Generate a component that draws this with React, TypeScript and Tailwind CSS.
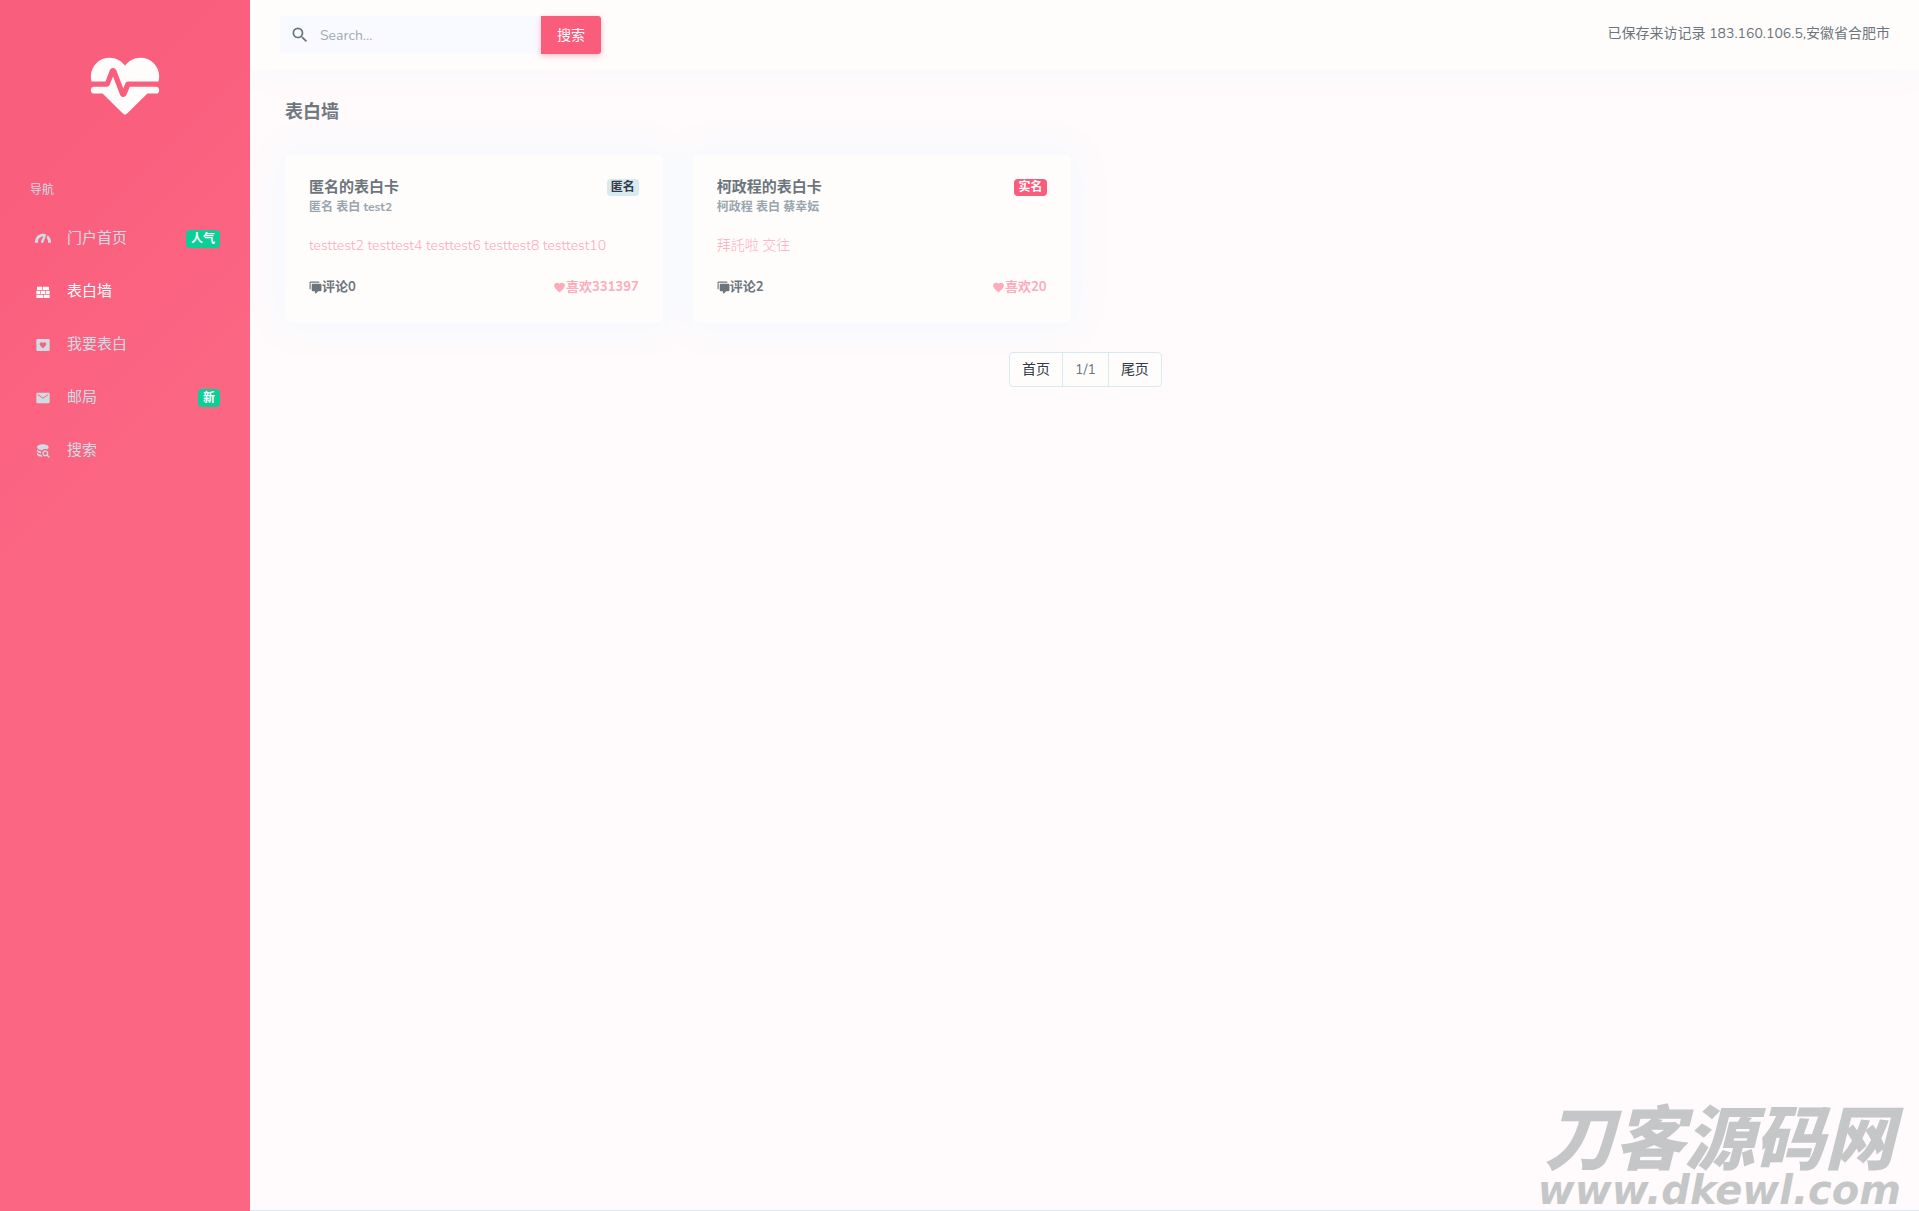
import React from "react";

const ICONS = {
  pulse:
    "M7.5,4A5.5,5.5 0 0,0 2,9.5C2,10 2.09,10.5 2.22,11H6.3L7.57,7.63C7.87,6.83 9.05,6.75 9.43,7.63L11.5,13L12.09,11.58C12.22,11.25 12.57,11 13,11H21.78C21.91,10.5 22,10 22,9.5A5.5,5.5 0 0,0 16.5,4C14.64,4 13,4.93 12,6.34C11,4.93 9.36,4 7.5,4M3,12.5A1,1 0 0,0 2,13.5A1,1 0 0,0 3,14.5H5.44L11,20C12,20.9 12,20.9 13,20L18.56,14.5H21A1,1 0 0,0 22,13.5A1,1 0 0,0 21,12.5H13.4L12.47,14.8C12.07,15.81 10.92,15.67 10.55,14.83L8.5,9.5L7.54,11.83C7.39,12.21 7.05,12.5 6.6,12.5H3Z",
  gauge:
    "M12,4C5.4,4 0,9.4 0,16V17.5H4.5V16C4.5,11.9 7.9,8.3 12,8.3H12.6L9,15.4C8,17.8 11.6,19 12.6,16.8L17,5.2C15.5,4.4 13.8,4 12,4M18.9,6.2L17.3,10.3C18.7,11.8 19.5,13.8 19.5,16V17.5H24V16C24,12 22,8.4 18.9,6.2Z",
  wall: "M2,16H12V21H2V16M2,10H8V15H2V10M9,10H15V15H9V10M16,10H22V15H16V10M13,16H22V21H13V16M3,4H11V9H3V4M12,4H21V9H12V4Z",
  heartBox:
    "M4,3H20A2,2 0 0,1 22,5V19A2,2 0 0,1 20,21H4A2,2 0 0,1 2,19V5A2,2 0 0,1 4,3M12,17L12.72,16.34C15.3,14 17,12.46 17,10.57C17,9.03 15.79,7.82 14.25,7.82C13.38,7.82 12.55,8.23 12,8.87C11.45,8.23 10.62,7.82 9.75,7.82C8.21,7.82 7,9.03 7,10.57C7,12.46 8.7,14 11.28,16.34L12,17Z",
  mail: "M20,4H4A2,2 0 0,0 2,6V18A2,2 0 0,0 4,20H20A2,2 0 0,0 22,18V6A2,2 0 0,0 20,4M20,7.5L12,13L4,7.5V6L12,11.5L20,6V7.5Z",
  database:
    "M18.68,12.32C16.92,10.56 14.07,10.57 12.32,12.33C10.56,14.09 10.56,16.94 12.32,18.69C13.81,20.17 16.11,20.43 17.89,19.32L21,22.39L22.39,21L19.3,17.89C20.43,16.12 20.17,13.8 18.68,12.32M17.27,17.27C16.29,18.25 14.71,18.24 13.73,17.27C12.76,16.29 12.76,14.71 13.74,13.73C14.71,12.76 16.29,12.76 17.27,13.73C18.24,14.71 18.24,16.29 17.27,17.27M10.9,20.1C10.25,19.44 9.74,18.65 9.42,17.78C6.27,17.25 3,15.76 3,14V17C3,19.21 7.58,21 12,21V21C11.6,20.74 11.23,20.44 10.9,20.1M3,9V12C3,13.68 6.07,15.12 9,15.7C9,15.63 9,15.57 9,15.5C9,14.57 9.2,13.65 9.58,12.81C6.34,12.3 3,10.79 3,9M12,2C7.58,2 3,4 3,6.5C3,9 7,10.68 10.85,11H10.9C12.1,9.74 13.76,9 15.5,9C16.41,9 17.31,9.19 18.14,9.56C19.17,9.09 20.5,8.12 20.5,6.5C20.5,4 16.42,2 12,2Z",
  magnify:
    "M9.5,3A6.5,6.5 0 0,1 16,9.5C16,11.11 15.41,12.59 14.44,13.73L14.71,14H15.5L20.5,19L19,20.5L14,15.5V14.71L13.73,14.44C12.59,15.41 11.11,16 9.5,16A6.5,6.5 0 0,1 3,9.5A6.5,6.5 0 0,1 9.5,3M9.5,5C7,5 5,7 5,9.5C5,12 7,14 9.5,14C12,14 14,12 14,9.5C14,7 12,5 9.5,5Z",
  comments:
    "M12,23A1,1 0 0,1 11,22V19H7A2,2 0 0,1 5,17V7A2,2 0 0,1 7,5H21A2,2 0 0,1 23,7V17A2,2 0 0,1 21,19H16.9L13.2,22.71C13,22.9 12.75,23 12.5,23V23H12M3,15H1V3A2,2 0 0,1 3,1H19V3H3V15Z",
  heart:
    "M12,21.35L10.55,20.03C5.4,15.36 2,12.27 2,8.5C2,5.41 4.42,3 7.5,3C9.24,3 10.91,3.81 12,5.08C13.09,3.81 14.76,3 16.5,3C19.58,3 22,5.41 22,8.5C22,12.27 18.6,15.36 13.45,20.03L12,21.35Z",
};

function Icon({ name, className }: { name: keyof typeof ICONS; className: string }) {
  return (
    <svg viewBox="0 0 24 24" fill="currentColor" aria-hidden="true" className={className}>
      <path d={ICONS[name]} />
    </svg>
  );
}

type NavItem = { icon: keyof typeof ICONS; label: string; badge?: string; active?: boolean };

const NAV: NavItem[] = [
  { icon: "gauge", label: "门户首页", badge: "人气" },
  { icon: "wall", label: "表白墙", active: true },
  { icon: "heartBox", label: "我要表白" },
  { icon: "mail", label: "邮局", badge: "新" },
  { icon: "database", label: "搜索" },
];

const CARDS = [
  {
    title: "匿名的表白卡",
    sub: "匿名 表白 test2",
    tag: "匿名",
    anonymous: true,
    text: "testtest2 testtest4 testtest6 testtest8 testtest10",
    comments: 0,
    likes: 331397,
  },
  {
    title: "柯政程的表白卡",
    sub: "柯政程 表白 蔡幸妘",
    tag: "实名",
    anonymous: false,
    text: "拜託啦 交往",
    comments: 2,
    likes: 20,
  },
];

function Sidebar() {
  return (
    <aside className="relative z-10 w-[250px] shrink-0 bg-linear-135 from-[#fa5e7d] from-15% to-[#fb6683] to-40%">
      <a href="#" aria-label="首页" className="flex justify-center pt-11 text-[#fffdfc]">
        <Icon name="pulse" className="size-[82px]" />
      </a>
      <h2 className="mt-[54px] px-[30px] text-[12px] leading-5 text-[#cedce4]">导航</h2>
      <nav className="mt-3">
        <ul>
          {NAV.map((item) => (
            <li key={item.label}>
              <a
                href="#"
                className={
                  item.active
                    ? "flex h-[53px] items-center px-[30px] text-[15px] text-[#fffdfc]"
                    : "flex h-[53px] items-center px-[30px] text-[15px] text-[#cedce4]"
                }
              >
                <Icon name={item.icon} className="ml-[5px] mr-4 size-4" />
                <span>{item.label}</span>
                {item.badge && (
                  <span className="ml-auto rounded-[4px] bg-[#0acf97] px-[5px] text-[12px] leading-[18px] font-bold text-[#fffdfc]">
                    {item.badge}
                  </span>
                )}
              </a>
            </li>
          ))}
        </ul>
      </nav>
    </aside>
  );
}

function Topbar() {
  return (
    <header className="flex h-[70px] items-center justify-between bg-[#fffdfc] pr-[29px] pl-[30px] shadow-[0_0_40px_0_#f4faff]">
      <form className="flex h-[38px]" onSubmit={(e) => e.preventDefault()}>
        <label className="flex w-[261px] items-center rounded-l-[4px] bg-[#f9faff]">
          <Icon name="magnify" className="ml-[10px] size-5 shrink-0 text-[#6c757d]" />
          <input
            type="text"
            aria-label="Search"
            placeholder="Search..."
            className="ml-[10px] w-full bg-transparent text-[14px] outline-none placeholder:text-[#a0aab1]"
          />
        </label>
        <button
          type="submit"
          className="rounded-r-[3px] bg-[#fa5c7c] px-4 text-[14px] text-[#fffdfc] shadow-[0_2px_6px_0_rgba(250,92,124,0.4)]"
        >
          搜索
        </button>
      </form>
      <p className="pb-[2px] text-[14px] leading-5">已保存来访记录 183.160.106.5,安徽省合肥市</p>
    </header>
  );
}

function Card({ card }: { card: (typeof CARDS)[number] }) {
  return (
    <article className="rounded-[4px] bg-[#fffdfc] px-6 pt-[22px] pb-[25px] shadow-[0_0_40px_8px_#f4faff]">
      <div className="flex items-center justify-between">
        <h2 className="text-[15px] leading-5 font-bold">{card.title}</h2>
        <span
          className={
            card.anonymous
              ? "rounded-[4px] bg-[#d8e9f0] px-1 text-[12px] leading-[17px] font-bold text-[#313a46]"
              : "rounded-[4px] bg-[#fa5c7c] px-1 text-[12px] leading-[17px] font-bold text-[#fffdfc]"
          }
        >
          {card.tag}
        </span>
      </div>
      <p className="text-[12px] leading-5 font-bold text-[#98a6ad]">{card.sub}</p>
      <p className="mt-[19px] text-[14px] leading-5 font-light text-[#fdabbb]">{card.text}</p>
      <div className="mt-[21px] flex justify-between text-[13px] leading-5 font-bold">
        <a href="#" className="flex items-center">
          <Icon name="comments" className="size-[13px]" />
          <span>评论{card.comments}</span>
        </a>
        <button type="button" className="flex items-center text-[#fdabbb]">
          <Icon name="heart" className="size-[13px]" />
          <span>喜欢{card.likes}</span>
        </button>
      </div>
    </article>
  );
}

export default function App() {
  return (
    <div className="flex min-h-screen bg-[#fffafb] font-['Nunito','Noto_Sans','Noto_Sans_CJK_SC',sans-serif] text-[#6c757d]">
      <Sidebar />
      <div className="relative flex min-w-0 flex-1 flex-col">
        <Topbar />
        <main className="flex-1 pr-[33px] pl-[35px]">
          <h1 className="pt-[27px] text-[18px] leading-[30px] font-bold">表白墙</h1>
          <div className="mt-7 grid grid-cols-4 gap-[30px]">
            {CARDS.map((card) => (
              <Card key={card.title} card={card} />
            ))}
          </div>
          <nav aria-label="分页" className="mt-[30px] flex justify-center">
            <ul className="flex divide-x divide-[#d8e9f0] rounded-[4px] border border-[#d8e9f0] bg-[#fffdfc] text-[14px] leading-[33px]">
              <li>
                <a href="#" className="block px-3 text-[#313a46]">首页</a>
              </li>
              <li className="px-3">1/1</li>
              <li>
                <a href="#" className="block px-3 text-[#313a46]">尾页</a>
              </li>
            </ul>
          </nav>
        </main>
        <footer className="border-t border-[#d8e9f0]" />
        <div className="absolute right-[18px] bottom-0 flex flex-col items-center font-bold text-[#c5c6c8] italic">
          <span className="font-['Noto_Sans_CJK_SC',sans-serif] text-[70px] leading-[70px] font-black">刀客源码网</span>
          <span className="font-['DejaVu_Sans',sans-serif] text-[40px] leading-[42px]">www.dkewl.com</span>
        </div>
      </div>
    </div>
  );
}
